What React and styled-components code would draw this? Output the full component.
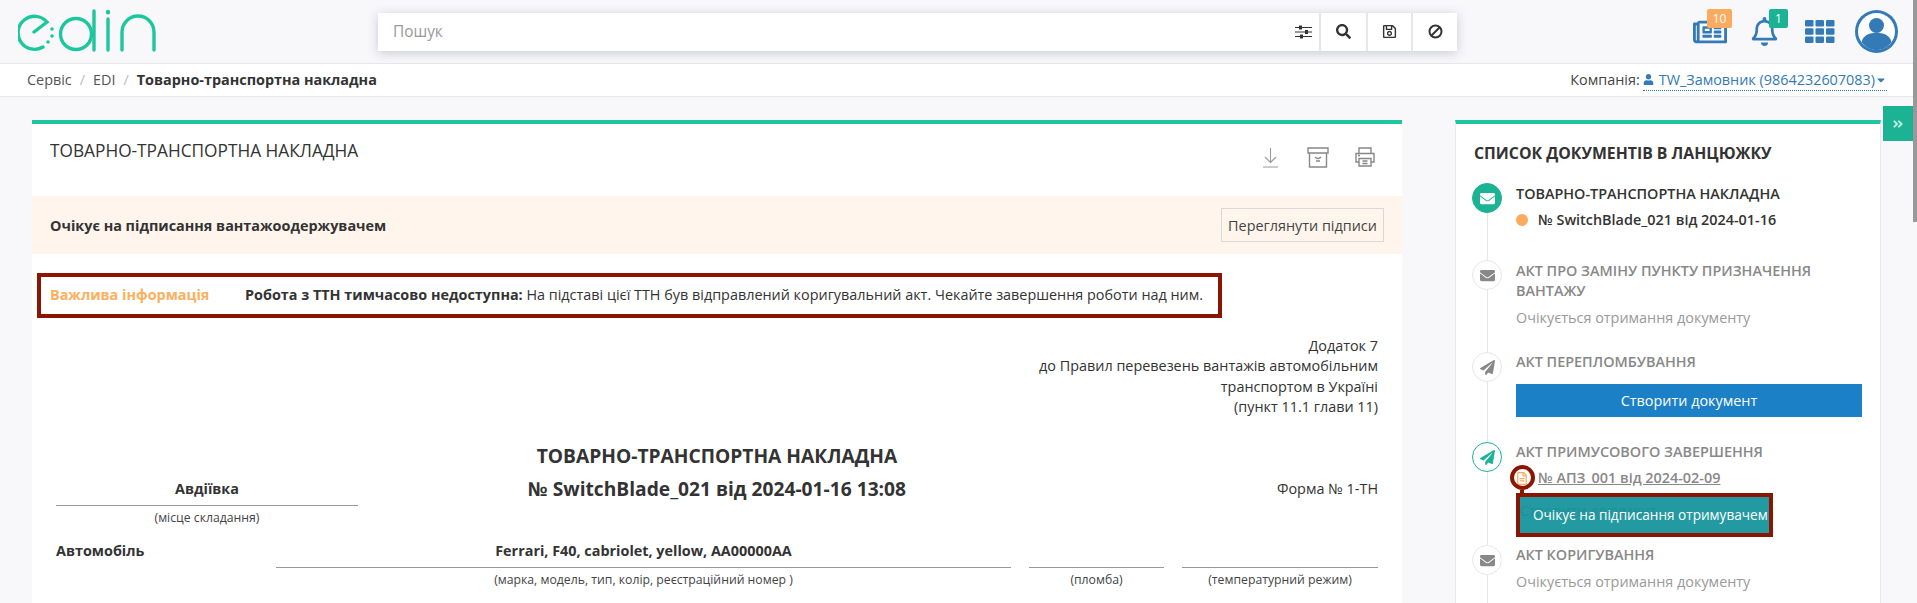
import React from "react";
import styled, { createGlobalStyle } from "styled-components";
import { FaEnvelope, FaPaperPlane, FaUser, FaCaretDown, FaRegFileAlt, FaSearch, FaRegSave, FaAngleDoubleRight, FaRegBell, FaRegNewspaper } from "react-icons/fa";

const Global = createGlobalStyle`
  html, body { margin: 0; padding: 0; background: #f8f8fb; }
  body { font-family: "Open Sans", "Liberation Sans", sans-serif; font-size: 14.4px; line-height: 20px; color: #333; }
  * { box-sizing: border-box; }
`;
const Page = styled.div`position: relative; width: 1917px; height: 603px; overflow: hidden;`;
const Header = styled.header`height: 64px; display: flex; align-items: center; border-bottom: 1px solid #e7e7e9; padding-left: 18px;`;
const Logo = styled.svg`width: 140px; height: 64px; flex: none; color: #1cc79e;`;
const SearchBar = styled.div`
  margin-left: 220px; width: 1079px; height: 38px; display: flex; background: #fff; flex: none;
  box-shadow: 0 2px 10px rgba(60, 60, 90, .25);
`;
const SearchInput = styled.div`flex: 1; padding-left: 15px; font-size: 15.4px; line-height: 38px; color: #999; `;
const SearchBtn = styled.div`
  width: ${p => p.$w}px; display: flex; align-items: center; justify-content: center; color: #333; font-size: 15px;
  border-left: ${p => p.$plain ? "none" : "2px solid #e7e7e9"};
`;
const HeaderIcons = styled.div`flex: 1; display: flex; align-items: center; justify-content: flex-start; padding-left: 236px; color: #337ab7;`;
const IconSlot = styled.div`position: relative; width: ${p => p.$w}px; margin-right: ${p => p.$mr}px; height: 42px; display: flex; align-items: center; justify-content: center; flex: none;`;
const Badge = styled.span`
  position: absolute; top: -2px; left: ${p => p.$left}px; width: ${p => p.$w}px; height: 19px; border-radius: 2px; background: ${p => p.$bg};
  color: #fff; font-size: 12px; line-height: 19px; text-align: center;
`;
const Crumbs = styled.div`height: 33px; background: #fff; border-bottom: 1px solid #e7e7e9; display: flex; align-items: center; justify-content: space-between; padding: 0 30px 0 27px;`;
const CrumbList = styled.div`display: flex; align-items: center; color: #555;`;
const Sep = styled.span`color: #bbb; margin: 0 8px;`;
const CrumbNow = styled.b`color: #333; font-weight: 700; margin-left: 0;`;
const Company = styled.div`display: flex; align-items: center; color: #444;`;
const CompanyLink = styled.span`
  margin-left: 3px; color: #337ab7; display: flex; align-items: center; gap: 5px; height: 22px; border-bottom: 1px dotted #337ab7;
`;
const Caret = styled(FaCaretDown)`margin-left: -5px; width: 12px; height: 12px;`;
const Content = styled.div`display: flex; padding: 23px 0 0 32px; gap: 53px;`;
const Card = styled.section`
  background: #fff; border-top: 4px solid #20c5a0; flex: none; width: ${p => p.$w}px; height: 520px;
`;
const SideCard = styled(Card)`border-left: 1px solid #e8e8ea; border-right: 1px solid #e8e8ea; padding: 0 18px 0 16px;`;
const CardHead = styled.div`height: 72px; display: flex; justify-content: space-between; padding: 14px 14px 0 18px;`;
const CardTitle = styled.h2`margin: 3px 0 0; font-size: 17.28px; font-weight: 400; line-height: 20px; color: #333;`;
const Tools = styled.div`display: grid; grid-template-columns: repeat(3, 47px); justify-items: center; margin-top: 9px; height: 22px;`;
const Band = styled.div`height: 58px; background: #fff5ec; display: flex; align-items: center; justify-content: space-between; padding: 0 18px; font-weight: 700;`;
const BandText = styled.span`padding-top: 1px;`;
const Outline = styled.button`
  font: 400 14.4px "Open Sans", sans-serif; color: #444; background: transparent; border: 1px solid #d8d8d4; height: 34px; width: 163px; padding: 0; 
`;
const Important = styled.div`
  margin: 19px 0 0 5px; width: 1185px; height: 45px; border: 4px solid #8b1500; display: flex; align-items: center; padding: 0 0 1px 9px;
`;
const ImportantLabel = styled.span`color: #fbb05e; font-weight: 700; width: 195px; flex: none;`;
const Doc = styled.div`padding: 18px 24px 0;`;
const Annex = styled.div`text-align: right; line-height: 20.4px;`;
const TitleRow = styled.div`display: grid; grid-template-columns: 1fr auto 1fr; margin-top: 21px;`;
const Place = styled.div`width: 302px; padding-top: 40px; text-align: center;`;
const Filled = styled.div`font-weight: 700; text-align: ${p => p.$left ? "left" : "center"}; padding-bottom: 6px; border-bottom: ${p => p.$noline ? "none" : "1px solid #999"}; min-height: 27px;`;
const Hint = styled.div`font-size: 12.24px; line-height: 16px; margin-top: 4px; color: #444; text-align: center;`;
const DocTitle = styled.div`text-align: center; font-size: 19.2px; font-weight: 700; line-height: 33px;`;
const FormNo = styled.div`text-align: right; padding-top: 40px;`;
const CarRow = styled.div`display: grid; grid-template-columns: 202px 735px 135px 196px; column-gap: 18px; margin-top: 15px;`;
const SideTitle = styled.h3`margin: 0; padding-top: 19px; font-size: 15.8px; line-height: 20px; font-weight: 700; color: #333; height: 59px; padding-left: 2px;`;
const Timeline = styled.div`
  position: relative;
  &::before { content: ""; position: absolute; left: 15px; top: 0; bottom: 0; width: 1px; background: #e6e6e6; }
`;
const Step = styled.div`position: relative; display: flex; gap: 14px; height: ${p => p.$h}px;`;
const Circle = styled.div`
  flex: none; width: 30px; height: 30px; border-radius: 50%; display: flex; align-items: center; justify-content: center; font-size: 15px; position: relative;
  background: ${p => p.$done ? "#1bb394" : "#fff"}; color: ${p => p.$done ? "#fff" : p.$active ? "#1bb394" : "#888"};
  border: 1px solid ${p => p.$done ? "#1bb394" : p.$active ? "#1bb394" : "#e7e7e7"};
`;
const StepBody = styled.div`flex: 1; padding-top: ${p => p.$pt ?? 1}px; min-width: 0;`;
const StepTitle = styled.div`font-weight: 600; font-size: 14.4px; line-height: 20px; color: ${p => p.$dark ? "#333" : "#888"}; width: 320px;`;
const DocRow = styled.div`position: relative; margin-top: 6px; display: flex; align-items: center; gap: 10px; font-weight: 600; font-size: 14.4px; color: ${p => p.$link ? "#888" : "#333"}; text-decoration: ${p => p.$link ? "underline" : "none"};`;
const Dot = styled.span`width: 12px; height: 12px; border-radius: 50%; background: #fbab5e; flex: none;`;
const FileIcon = styled.span`display: flex; width: 12px; color: #fbab5e; font-size: 13px; flex: none;`;
const Callout = styled.span`
  position: absolute; left: -6px; top: -3px; width: 25px; height: 25px; border-radius: 50%; border: 4px solid #8b1500;
  &::after { content: ""; position: absolute; left: 6px; top: 21px; width: 4px; height: 5px; background: #8b1500; }
`;
const Waiting = styled.div`margin-top: 7px; color: #999; font-size: 14.4px;`;
const Create = styled.div`margin-top: 12px; width: 346px; height: 33px; background: #1b80c6; color: #fff; text-align: center; line-height: 33px;`;
const Status = styled.div`
  position: relative; margin-top: 5px; width: 257px; height: 44px; background: #239aa2; border: 4px solid #8b1500; color: #fff; font-size: 13.6px; line-height: 36px; padding-left: 13px;
`;
const Ghost = styled.span`position: absolute; left: 0; top: 4px; font-size: 14.4px; line-height: 20px; color: #1f8f97;`;
const StatusText = styled.span`position: relative;`;
const Toggle = styled.div`position: absolute; left: 1883px; top: 106px; width: 30px; height: 35px; background: #1bb394; color: #bfeee2; display: flex; align-items: center; justify-content: center; font-size: 12px; padding-top: 0;`;
const Scroll = styled.div`position: absolute; right: 0; top: 0; width: 4px; height: 222px; background: #999;`;

const LogoMark = () => (
  <Logo viewBox="0 0 140 64" fill="none" stroke="currentColor" strokeWidth="3.4" strokeLinecap="round">
    <path d="M16 32 L29 22 A16.5 16.5 0 1 0 25 47" />
    <circle cx="58" cy="34" r="15.5" />
    <path d="M76 11 V50" />
    <path d="M90 19 V50" />
    <path d="M90 12 V12.2" strokeWidth="4.4" />
    <path d="M104 50 V32 A15.5 15.5 0 0 1 136 32 V50" />
    <g fill="currentColor" stroke="none">
      <circle cx="34" cy="29" r="1.8" /><circle cx="34" cy="36" r="1.8" /><circle cx="30" cy="42" r="1.8" />
    </g>
  </Logo>
);
const Sliders = () => (
  <svg width="17" height="14" viewBox="0 0 17 14" fill="#333">
    <path d="M0 2h17v1H0zM0 6.500h17v1H0zM0 11h17v1H0z" /><rect x="4" y="0.5" width="3" height="4" /><rect x="10" y="5" width="3" height="4" /><rect x="5" y="9.5" width="3" height="4" />
  </svg>
);
const Ban = () => (
  <svg width="15" height="15" viewBox="0 0 15 15" fill="none" stroke="#333" strokeWidth="2"><circle cx="7.500" cy="7.500" r="6" /><path d="M3.500 11.500l8-8" /></svg>
);
const Download = () => (
  <svg width="15" height="21" viewBox="0 0 15 21" fill="none" stroke="#999" strokeWidth="1.1"><path d="M7.500 1v14M2 10l5.500 5.500L13 10M0 20h15" /></svg>
);
const Archive = () => (
  <svg width="22" height="21" viewBox="0 0 22 21" fill="none" stroke="#888" strokeWidth="1.4"><path d="M1 1h20v5H1zM2.500 6v14h17V6M8 10q3 3 6 0M9 14h4" /></svg>
);
const Printer = () => (
  <svg width="20" height="20" viewBox="0 0 20 20" fill="none" stroke="#888" strokeWidth="1.4"><path d="M4 6V1h12v5M4 15H1V6.500h18V15h-3M4 11.500h12V19H4zM7.500 14h5M7.500 16.500h5M3 8.500h2" /></svg>
);
const Apps = () => (
  <svg width="30" height="23" viewBox="0 0 30 23" fill="#337ab7">
    {[0, 1, 2].flatMap(r => [0, 1, 2].map(c => <rect key={`${r}${c}`} x={c * 10.5} y={r * 8.2} width="8.5" height="6.5" rx="1.2" />))}
  </svg>
);
const Avatar = () => (
  <svg width="43" height="43" viewBox="0 0 43 43">
    <circle cx="21.500" cy="21.500" r="21.500" fill="#337ab7" />
    <circle cx="21.500" cy="21.500" r="18.500" fill="#fff" />
    <circle cx="21.500" cy="15.500" r="7.500" fill="#337ab7" />
    <path d="M6.500 32 C9 24 15 23 21.500 23 S34 24 36.500 32 C32 38 27 40 21.500 40 S11 38 6.500 32Z" fill="#337ab7" />
  </svg>
);

export default function App() {
  return (
    <Page>
      <Global />
      <Header>
        <LogoMark />
        <SearchBar>
          <SearchInput>Пошук</SearchInput>
          <SearchBtn $plain $w={32}><Sliders /></SearchBtn>
          <SearchBtn $w={47}><FaSearch /></SearchBtn>
          <SearchBtn $w={45}><FaRegSave /></SearchBtn>
          <SearchBtn $w={46}><Ban /></SearchBtn>
        </SearchBar>
        <HeaderIcons>
          <IconSlot $w={34} $mr={24}><FaRegNewspaper size={34} /><Badge $left={14} $w={25} $bg="#fbab5e">10</Badge></IconSlot>
          <IconSlot $w={27} $mr={27}><FaRegBell size={29} /><Badge $left={18} $w={19} $bg="#1bb394">1</Badge></IconSlot>
          <IconSlot $w={30} $mr={20}><Apps /></IconSlot>
          <IconSlot $w={43} $mr={0}><Avatar /></IconSlot>
        </HeaderIcons>
      </Header>
      <Crumbs>
        <CrumbList>Сервіс<Sep>/</Sep>EDI<Sep>/</Sep><CrumbNow>Товарно-транспортна накладна</CrumbNow></CrumbList>
        <Company>Компанія:<CompanyLink><FaUser size={11} />TW_Замовник (9864232607083)<Caret /></CompanyLink></Company>
      </Crumbs>
      <Content>
        <Card $w={1370}>
          <CardHead>
            <CardTitle>ТОВАРНО-ТРАНСПОРТНА НАКЛАДНА</CardTitle>
            <Tools><Download /><Archive /><Printer /></Tools>
          </CardHead>
          <Band><BandText>Очікує на підписання вантажоодержувачем</BandText><Outline>Переглянути підписи</Outline></Band>
          <Important>
            <ImportantLabel>Важлива інформація</ImportantLabel>
            <span><b>Робота з ТТН тимчасово недоступна:</b> На підставі цієї ТТН був відправлений коригувальний акт. Чекайте завершення роботи над ним.</span>
          </Important>
          <Doc>
            <Annex>Додаток 7<br />до Правил перевезень вантажів автомобільним<br />транспортом в Україні<br />(пункт 11.1 глави 11)</Annex>
            <TitleRow>
              <Place><Filled>Авдіївка</Filled><Hint>(місце складання)</Hint></Place>
              <DocTitle>ТОВАРНО-ТРАНСПОРТНА НАКЛАДНА<br />№ SwitchBlade_021 від 2024-01-16 13:08</DocTitle>
              <FormNo>Форма № 1-ТН</FormNo>
            </TitleRow>
            <CarRow>
              <Filled $left $noline>Автомобіль</Filled>
              <div><Filled>Ferrari, F40, cabriolet, yellow, AA00000AA</Filled><Hint>(марка, модель, тип, колір, реєстраційний номер )</Hint></div>
              <div><Filled>&nbsp;</Filled><Hint>(пломба)</Hint></div>
              <div><Filled>&nbsp;</Filled><Hint>(температурний режим)</Hint></div>
            </CarRow>
          </Doc>
        </Card>
        <SideCard $w={426}>
          <SideTitle>СПИСОК ДОКУМЕНТІВ В ЛАНЦЮЖКУ</SideTitle>
          <Timeline>
            <Step $h={77}>
              <Circle $done><FaEnvelope /></Circle>
              <StepBody>
                <StepTitle $dark>ТОВАРНО-ТРАНСПОРТНА НАКЛАДНА</StepTitle>
                <DocRow><Dot />№ SwitchBlade_021 від 2024-01-16</DocRow>
              </StepBody>
            </Step>
            <Step $h={92}>
              <Circle><FaEnvelope /></Circle>
              <StepBody>
                <StepTitle>АКТ ПРО ЗАМІНУ ПУНКТУ ПРИЗНАЧЕННЯ ВАНТАЖУ</StepTitle>
                <Waiting>Очікується отримання документу</Waiting>
              </StepBody>
            </Step>
            <Step $h={90}>
              <Circle><FaPaperPlane /></Circle>
              <StepBody $pt={0}>
                <StepTitle>АКТ ПЕРЕПЛОМБУВАННЯ</StepTitle>
                <Create>Створити документ</Create>
              </StepBody>
            </Step>
            <Step $h={103}>
              <Circle $active><FaPaperPlane /></Circle>
              <StepBody $pt={0}>
                <StepTitle>АКТ ПРИМУСОВОГО ЗАВЕРШЕННЯ</StepTitle>
                <DocRow $link><FileIcon><FaRegFileAlt /></FileIcon><span>№ АПЗ_001 від 2024-02-09</span><Callout /></DocRow>
                <Status><Ghost>Створити документ</Ghost><StatusText>Очікує на підписання отримувачем</StatusText></Status>
              </StepBody>
            </Step>
            <Step $h={60}>
              <Circle><FaEnvelope /></Circle>
              <StepBody $pt={0}>
                <StepTitle>АКТ КОРИГУВАННЯ</StepTitle>
                <Waiting>Очікується отримання документу</Waiting>
              </StepBody>
            </Step>
          </Timeline>
        </SideCard>
      </Content>
      <Toggle><FaAngleDoubleRight /></Toggle>
      <Scroll />
    </Page>
  );
}
